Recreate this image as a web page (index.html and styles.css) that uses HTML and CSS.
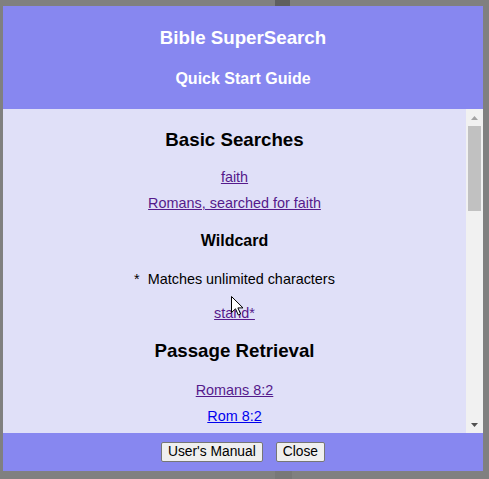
FILE: index.html
```html
<!DOCTYPE html>
<html>
<head>
<meta charset="utf-8">
<title>Bible SuperSearch - Quick Start Guide</title>
<link rel="stylesheet" href="styles.css">
</head>
<body>
<div class="strip strip-top"><span class="strip-block"></span></div>
<div class="dialog">
  <div class="dialog-header">
    <div class="title">Bible SuperSearch</div>
    <div class="subtitle">Quick Start Guide</div>
  </div>
  <div class="dialog-body">
    <div class="scroll-content">
      <h3 class="section-title first">Basic Searches</h3>
      <div class="row row-first"><a class="link visited" href="#">faith</a></div>
      <div class="row"><a class="link visited" href="#">Romans, searched for faith</a></div>
      <h4 class="sub-title">Wildcard</h4>
      <div class="row row-desc">*&nbsp; Matches unlimited characters</div>
      <div class="row row-tight"><a class="link visited" href="#">stand*</a></div>
      <h3 class="section-title">Passage Retrieval</h3>
      <div class="row row-first row-passage"><a class="link visited" href="#">Romans 8:2</a></div>
      <div class="row"><a class="link" href="#">Rom 8:2</a></div>
    </div>
    <div class="scrollbar">
      <div class="sb-button">
        <svg width="7" height="4" viewBox="0 0 7 4"><polygon points="0,4 3.5,0 7,4" fill="#a3a3a3"/></svg>
      </div>
      <div class="sb-thumb"></div>
      <div class="sb-track"></div>
      <div class="sb-button">
        <svg width="7" height="4" viewBox="0 0 7 4"><polygon points="0,0 7,0 3.5,4" fill="#505050"/></svg>
      </div>
    </div>
    <svg class="cursor" width="13" height="20" viewBox="0 0 13 20"><path d="M0.5 0.5 L0.5 16.5 L4.5 12.8 L7.3 19 L9.6 18 L6.9 11.9 L12 11.9 Z" fill="#ffffff" stroke="#000000" stroke-width="1" stroke-linejoin="round"/></svg>
  </div>
  <div class="dialog-footer">
    <button class="btn" type="button">User's Manual</button>
    <button class="btn" type="button">Close</button>
  </div>
</div>
<div class="strip strip-bottom"><span class="strip-block"></span></div>
</body>
</html>
```
FILE: styles.css
```css
html, body {
  margin: 0;
  padding: 0;
}
body {
  background: #808080;
  font-family: "Liberation Sans", Arial, sans-serif;
  width: 489px;
  height: 479px;
  overflow: hidden;
}
.strip {
  display: flex;
}
.strip-top {
  height: 6px;
}
.strip-top .strip-block {
  margin-left: 275px;
  width: 15px;
  height: 6px;
  background: #5f5f5f;
}
.strip-bottom {
  height: 8px;
}
.strip-bottom .strip-block {
  margin-left: 275px;
  width: 17px;
  height: 8px;
  background: #787878;
}
.dialog {
  margin-left: 3px;
  width: 480px;
  display: flex;
  flex-direction: column;
}
.dialog-header {
  background: #8787f0;
  color: #ffffff;
  text-align: center;
  font-weight: bold;
  padding: 20px 0 20px;
}
.title {
  font-size: 18.72px;
  line-height: 24px;
}
.subtitle {
  font-size: 16px;
  line-height: 20px;
  margin-top: 19px;
}
.dialog-body {
  position: relative;
  height: 324px;
  display: flex;
  background: #e0e0f8;
}
.scroll-content {
  flex: 1;
  overflow: hidden;
  text-align: center;
  padding-top: 19px;
  color: #000000;
}
.section-title {
  margin: 13px 0 0;
  font-size: 18.72px;
  line-height: 24px;
  font-weight: bold;
}
.section-title.first {
  margin-top: 0;
}
.sub-title {
  margin: 15px 0 0;
  font-size: 16px;
  line-height: 20px;
  font-weight: bold;
}
.row {
  font-size: 14.4px;
  line-height: 26px;
}
.row-first {
  margin-top: 12px;
}
.row-passage {
  margin-top: 14px;
}
.row-desc {
  margin-top: 15px;
}
.row-tight {
  margin-top: 8px;
}
.link {
  color: #0000ee;
  text-decoration: underline;
}
.link.visited {
  color: #551a8b;
}
.scrollbar {
  width: 17px;
  background: #f1f1f1;
  display: flex;
  flex-direction: column;
}
.sb-button {
  height: 17px;
  display: flex;
  align-items: center;
  justify-content: center;
}
.sb-button svg {
  display: block;
}
.sb-thumb {
  margin: 0 2px;
  height: 85px;
  background: #c1c1c1;
}
.sb-track {
  flex: 1;
}
.cursor {
  position: absolute;
  left: 228px;
  top: 187px;
}
.dialog-footer {
  background: #8787f0;
  padding: 9px 0;
  display: flex;
  justify-content: center;
  gap: 13px;
}
.btn {
  font-family: "Liberation Sans", Arial, sans-serif;
  font-size: 13.8px;
  line-height: 16px;
  height: 20px;
  padding: 1px 6px;
  margin: 0;
  color: #000000;
  background: #efefef;
  border: 1px solid #767676;
  border-radius: 2px;
}
```
